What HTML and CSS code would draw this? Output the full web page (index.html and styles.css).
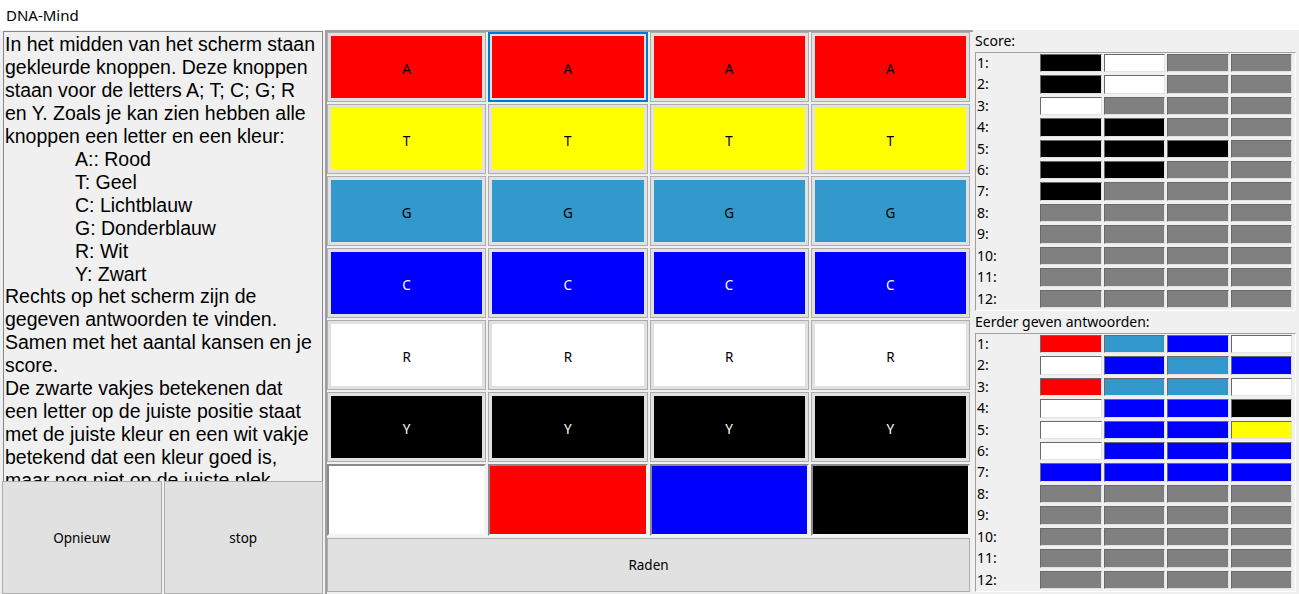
FILE: index.html
```html
<!DOCTYPE html>
<html lang="nl">
<head>
  <meta charset="UTF-8" />
  <title>DNA-Mind</title>
  <link rel="stylesheet" href="styles.css">
</head>
<body>
  <div class="titlebar">DNA-Mind</div>

  <div class="app">
    <!-- uitleg + knoppen links -->
    <div class="left">
      <div class="info">
        In het midden van het scherm staan<br>
        gekleurde knoppen. Deze knoppen<br>
        staan voor de letters A; T; C; G; R<br>
        en Y. Zoals je kan zien hebben alle<br>
        knoppen een letter en een kleur:<br>
        <span class="indent">A:: Rood</span><br>
        <span class="indent">T: Geel</span><br>
        <span class="indent">C: Lichtblauw</span><br>
        <span class="indent">G: Donderblauw</span><br>
        <span class="indent">R: Wit</span><br>
        <span class="indent">Y: Zwart</span><br>
        Rechts op het scherm zijn de<br>
        gegeven antwoorden te vinden.<br>
        Samen met het aantal kansen en je<br>
        score.<br>
        De zwarte vakjes betekenen dat<br>
        een letter op de juiste positie staat<br>
        met de juiste kleur en een wit vakje<br>
        betekend dat een kleur goed is,<br>
        maar nog niet op de juiste plek.
      </div>
      <div class="left-buttons">
        <button class="btn">Opnieuw</button>
        <button class="btn">stop</button>
      </div>
    </div>

    <!-- speelbord -->
    <div class="board">
      <div class="keys" id="keys"></div>
      <div class="guess">
        <div class="slot white"></div>
        <div class="slot red"></div>
        <div class="slot blue"></div>
        <div class="slot black"></div>
      </div>
      <button class="btn raden">Raden</button>
    </div>

    <!-- score en antwoorden -->
    <div class="side">
      <div class="label">Score:</div>
      <div class="table" id="score"></div>
      <div class="label">Eerder geven antwoorden:</div>
      <div class="table" id="answers"></div>
    </div>
  </div>

  <script>
    const letters = [
      ['A', 'red'], ['T', 'yellow'], ['G', 'lightblue'],
      ['C', 'blue'], ['R', 'white'], ['Y', 'black']
    ];
    const keys = document.getElementById('keys');
    letters.forEach(([letter, color], row) => {
      for (let i = 0; i < 4; i++) {
        const key = document.createElement('button');
        key.className = 'key';
        if (row === 0 && i === 1) key.classList.add('focus');
        const face = document.createElement('span');
        face.className = 'face ' + color;
        face.textContent = letter;
        key.appendChild(face);
        keys.appendChild(key);
      }
    });

    const score = [
      ['black', 'white'], ['black', 'white'], ['white'], ['black', 'black'],
      ['black', 'black', 'black'], ['black', 'black'], ['black']
    ];
    const answers = [
      ['red', 'lightblue', 'blue', 'white'],
      ['white', 'blue', 'lightblue', 'blue'],
      ['red', 'lightblue', 'lightblue', 'white'],
      ['white', 'blue', 'blue', 'black'],
      ['white', 'blue', 'blue', 'yellow'],
      ['white', 'blue', 'blue', 'blue'],
      ['blue', 'blue', 'blue', 'blue']
    ];

    function fillTable(id, data) {
      const table = document.getElementById(id);
      for (let r = 0; r < 12; r++) {
        const label = document.createElement('div');
        label.className = 'row-label';
        label.textContent = (r + 1) + ':';
        table.appendChild(label);
        for (let c = 0; c < 4; c++) {
          const cell = document.createElement('div');
          const color = (data[r] && data[r][c]) || 'gray';
          cell.className = 'cell ' + color;
          table.appendChild(cell);
        }
      }
    }
    fillTable('score', score);
    fillTable('answers', answers);
  </script>
</body>
</html>
```

FILE: styles.css
```css
body {
  margin: 0;
  height: 594px;
  overflow: hidden;
  background-color: #f0f0f0;
  font-family: "Noto Sans", sans-serif;
  color: #000;
}

.titlebar {
  height: 30px;
  box-sizing: border-box;
  padding-left: 6px;
  background-color: #fff;
  font-size: 15px;
  line-height: 30px;
}

.app {
  display: flex;
  height: 564px;
}

/* links */
.left {
  width: 325px;
  display: flex;
  flex-direction: column;
}

.info {
  height: 450px;
  box-sizing: border-box;
  margin: 1px 2px 0 3px;
  padding: 1px 0 0 1px;
  border: 1px solid #828790;
  border-bottom: none;
  overflow: hidden;
  white-space: nowrap;
  font-family: "Liberation Sans", Arial, sans-serif;
  font-size: 19.5px;
  line-height: 22.95px;
}

.indent {
  padding-left: 70px;
}

.left-buttons {
  flex: 1;
  display: flex;
  gap: 2px;
  padding-left: 2px;
  padding-right: 2px;
}

.btn {
  flex: 1;
  margin: 0;
  background-color: #e1e1e1;
  border: 1px solid #adadad;
  font-family: "Noto Sans", sans-serif;
  font-size: 13.5px;
  color: #000;
}

/* midden */
.board {
  width: 648px;
  box-sizing: border-box;
  display: flex;
  flex-direction: column;
  gap: 2px;
  padding-right: 3px;
  border-top: 2px solid #a0a0a0;
  border-left: 2px solid #a0a0a0;
}

.keys {
  display: grid;
  grid-template-columns: repeat(4, 1fr);
  grid-template-rows: repeat(6, 70px);
  gap: 2px;
}

.key {
  display: flex;
  margin: 0;
  padding: 3px;
  background-color: #e1e1e1;
  border: 1px solid #adadad;
}

.key.focus {
  padding: 2px;
  border: 2px solid #0078d7;
}

.face {
  flex: 1;
  display: flex;
  align-items: center;
  justify-content: center;
  padding-top: 3px;
  font-family: "Noto Sans", sans-serif;
  font-size: 13.5px;
  color: #000;
}

.face.blue,
.face.black {
  color: #fff;
}

.guess {
  display: grid;
  grid-template-columns: repeat(4, 1fr);
  gap: 2px;
  height: 72px;
}

.slot {
  border: 2px solid;
  border-color: #8a8a8a #f4f4f4 #f4f4f4 #8a8a8a;
}

.raden {
  flex: none;
  height: 54px;
}

/* rechts */
.side {
  flex: 1;
  padding-left: 2px;
}

.label {
  height: 22px;
  font-size: 14px;
  line-height: 22px;
}

.table {
  width: 321px;
  height: 259px;
  box-sizing: border-box;
  display: grid;
  grid-template-columns: 61px repeat(4, 1fr);
  grid-template-rows: repeat(12, 1fr);
  column-gap: 2px;
  row-gap: 3px;
  padding: 1px 3px 2px 1px;
  border: 1px solid;
  border-color: #a0a0a0 #fff #fff #a0a0a0;
}

.row-label {
  font-size: 14px;
  line-height: 18px;
  margin-right: -2px;
}

.cell {
  border: 1px solid;
  border-color: #696969 #e3e3e3 #e3e3e3 #696969;
}

.red { background-color: #ff0000; }
.yellow { background-color: #ffff00; }
.lightblue { background-color: #3399cc; }
.blue { background-color: #0000ff; }
.white { background-color: #fff; }
.black { background-color: #000; }
.gray { background-color: #808080; }
```
